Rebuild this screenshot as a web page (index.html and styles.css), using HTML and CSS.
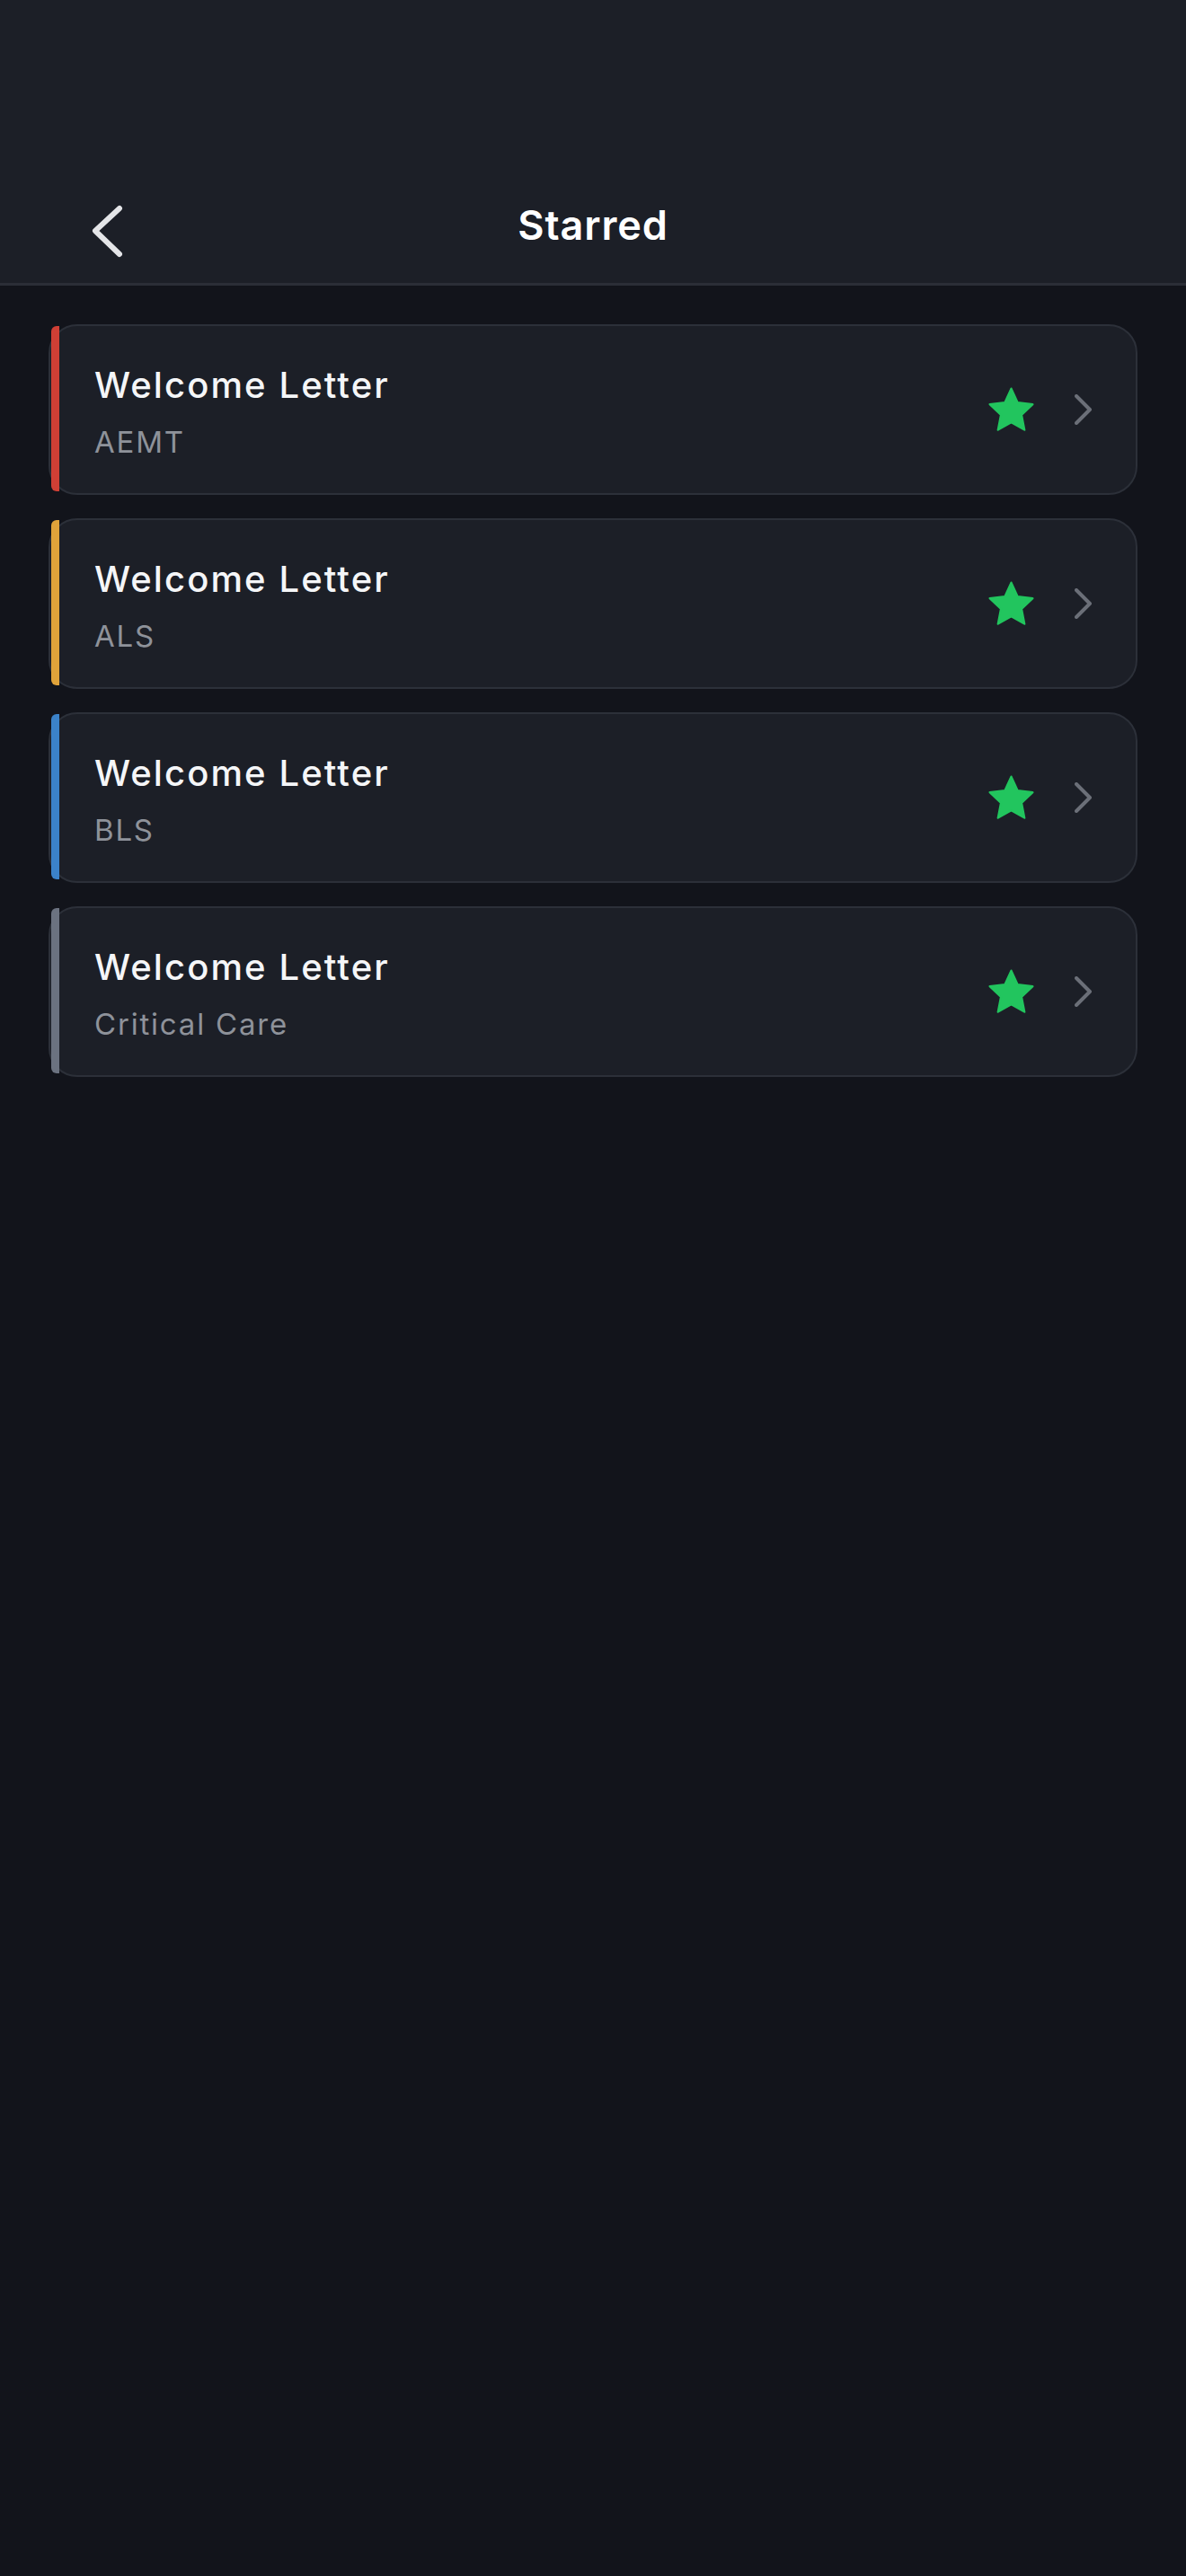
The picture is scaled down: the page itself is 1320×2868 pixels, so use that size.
FILE: index.html
```html
<!DOCTYPE html>
<html>
<head>
<meta charset="utf-8">
<link rel="stylesheet" href="styles.css">
</head>
<body>
<header class="header">
  <div class="nav">
    <div class="nav-left">
      <svg class="back" width="40" height="64" viewBox="0 0 40 64"><path d="M34 7 L7 32 L34 58" fill="none" stroke="#e4e5e8" stroke-width="6" stroke-linecap="round" stroke-linejoin="round"/></svg>
    </div>
    <h1 class="title">Starred</h1>
    <div class="nav-right"></div>
  </div>
</header>
<main class="list">
  <div class="card accent-red">
    <div class="text"><div class="name">Welcome Letter</div><div class="sub">AEMT</div></div>
    <svg class="star" width="61" height="61" viewBox="0 0 24 24"><path d="M12 2.6l2.8 6.1 6.6.8-4.9 4.6 1.3 6.6L12 17.4l-5.8 3.3 1.3-6.6-4.9-4.6 6.6-.8z" fill="#22c55e" stroke="#22c55e" stroke-width="0.9" stroke-linejoin="round"/></svg>
    <svg class="chev" width="20" height="34" viewBox="0 0 20 34"><path d="M2 2 L17 17 L2 32" fill="none" stroke="#6b6f78" stroke-width="4" stroke-linecap="round" stroke-linejoin="round"/></svg>
  </div>
  <div class="card accent-yellow">
    <div class="text"><div class="name">Welcome Letter</div><div class="sub">ALS</div></div>
    <svg class="star" width="61" height="61" viewBox="0 0 24 24"><path d="M12 2.6l2.8 6.1 6.6.8-4.9 4.6 1.3 6.6L12 17.4l-5.8 3.3 1.3-6.6-4.9-4.6 6.6-.8z" fill="#22c55e" stroke="#22c55e" stroke-width="0.9" stroke-linejoin="round"/></svg>
    <svg class="chev" width="20" height="34" viewBox="0 0 20 34"><path d="M2 2 L17 17 L2 32" fill="none" stroke="#6b6f78" stroke-width="4" stroke-linecap="round" stroke-linejoin="round"/></svg>
  </div>
  <div class="card accent-blue">
    <div class="text"><div class="name">Welcome Letter</div><div class="sub">BLS</div></div>
    <svg class="star" width="61" height="61" viewBox="0 0 24 24"><path d="M12 2.6l2.8 6.1 6.6.8-4.9 4.6 1.3 6.6L12 17.4l-5.8 3.3 1.3-6.6-4.9-4.6 6.6-.8z" fill="#22c55e" stroke="#22c55e" stroke-width="0.9" stroke-linejoin="round"/></svg>
    <svg class="chev" width="20" height="34" viewBox="0 0 20 34"><path d="M2 2 L17 17 L2 32" fill="none" stroke="#6b6f78" stroke-width="4" stroke-linecap="round" stroke-linejoin="round"/></svg>
  </div>
  <div class="card accent-gray">
    <div class="text"><div class="name">Welcome Letter</div><div class="sub">Critical Care</div></div>
    <svg class="star" width="61" height="61" viewBox="0 0 24 24"><path d="M12 2.6l2.8 6.1 6.6.8-4.9 4.6 1.3 6.6L12 17.4l-5.8 3.3 1.3-6.6-4.9-4.6 6.6-.8z" fill="#22c55e" stroke="#22c55e" stroke-width="0.9" stroke-linejoin="round"/></svg>
    <svg class="chev" width="20" height="34" viewBox="0 0 20 34"><path d="M2 2 L17 17 L2 32" fill="none" stroke="#6b6f78" stroke-width="4" stroke-linecap="round" stroke-linejoin="round"/></svg>
  </div>
</main>
</body>
</html>
```

FILE: styles.css
```css
* { box-sizing: border-box; }
html, body {
  margin: 0;
  padding: 0;
  background: #12141b;
  font-family: Inter, "Noto Sans", sans-serif;
  min-height: 2868px;
}
.header {
  height: 318px;
  background: #1c1f27;
  border-bottom: 3px solid #2b2e37;
  padding-top: 200px;
}
.nav {
  height: 100px;
  display: grid;
  grid-template-columns: 1fr auto 1fr;
  align-items: center;
}
.nav-left {
  padding-left: 99px;
  display: flex;
  align-items: center;
  padding-top: 14px;
}
.back { display: block; }
.title {
  margin: 0;
  font-size: 45px;
  font-weight: 600;
  color: #ffffff;
  letter-spacing: 0.9px;
}
.list {
  padding: 43px 54px 0 54px;
  display: flex;
  flex-direction: column;
  gap: 26px;
}
.card {
  position: relative;
  height: 190px;
  display: flex;
  align-items: center;
  background: #1c1f27;
  border: 2px solid #2c3039;
  border-radius: 32px;
  padding: 0 48px 0 49px;
}
.card::before {
  content: "";
  position: absolute;
  left: 1px;
  top: 0;
  bottom: 2px;
  width: 9px;
  border-radius: 6px 0 0 6px;
}
.accent-red::before { background: #cf3f35; }
.accent-yellow::before { background: #e0a33a; }
.accent-blue::before { background: #3b82c9; }
.accent-gray::before { background: #6b7280; }
.text {
  flex: 1;
  display: flex;
  flex-direction: column;
  gap: 19px;
  padding-top: 4px;
}
.name {
  font-size: 40px;
  line-height: 48px;
  font-weight: 500;
  color: #f5f6f8;
  letter-spacing: 2.1px;
}
.sub {
  font-size: 33px;
  line-height: 40px;
  color: #8e929a;
  letter-spacing: 1.8px;
}
.star { display: block; margin-right: 40px; }
.chev { display: block; }
```
